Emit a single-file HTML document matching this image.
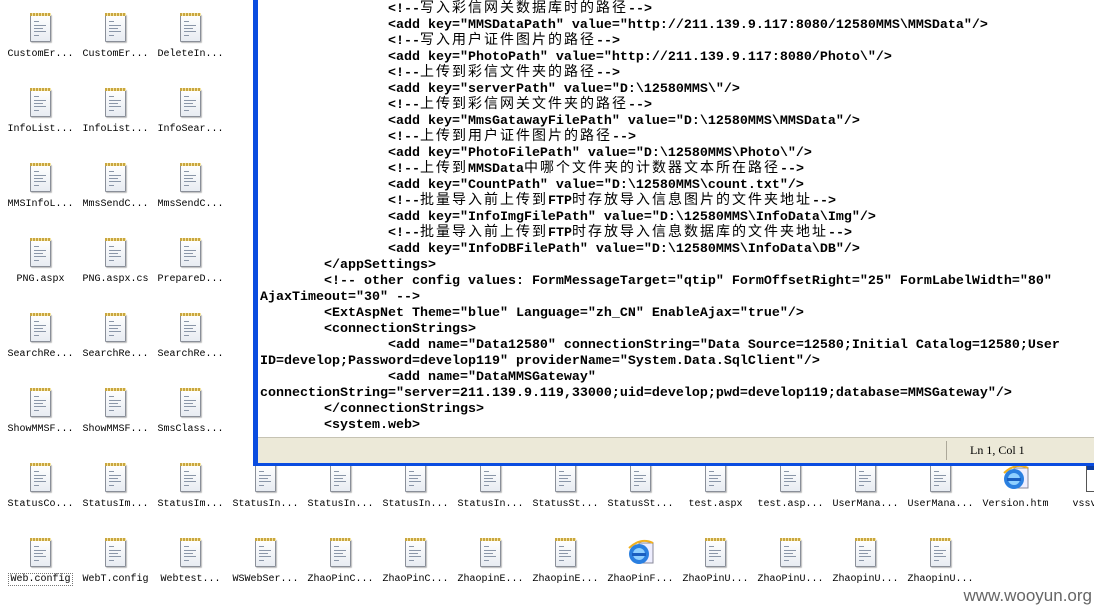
<!DOCTYPE html>
<html><head><meta charset="utf-8"><style>
body{margin:0;width:1094px;height:607px;overflow:hidden;background:#fff;position:relative;font-family:"Liberation Mono","Noto Sans CJK SC",monospace}
.ic{position:absolute;width:75px;height:70px}
.pg{position:absolute;left:27px;width:19px;height:26px;background:linear-gradient(#fff,#e8ecf2);border:1px solid #8a8f99;border-radius:1px;box-shadow:1px 1px 1px #bbb}
.pg:before{content:"";position:absolute;left:-1px;top:-2px;width:21px;height:3px;background:repeating-linear-gradient(90deg,#c9a640 0 2px,#f3e3a0 2px 3px)}
.pg i{position:absolute;left:3px;height:1px;background:#8a96a8}
.ie{position:absolute;left:24px;top:0;width:28px;height:28px}
.lb{position:absolute;top:35px;left:0;width:75px;text-align:center;font-size:10px;color:#000;white-space:nowrap;font-family:"Liberation Mono","Noto Sans CJK SC",monospace}
.sel{background:#fff;outline:1px dotted #777;padding:0 1px}
#win{position:absolute;left:253px;top:0;width:841px;height:466px;background:#0a4ce0}
#ed{position:absolute;left:5px;top:0;right:0;height:437px;background:#fff;overflow:hidden}
pre{margin:0;position:absolute;left:2px;top:2px;font-family:"Liberation Mono",monospace;font-weight:bold;font-size:13.33px;line-height:16px;color:#000}
pre .ln{height:16px;line-height:16px;white-space:pre;overflow:visible}
pre b{font-family:"Noto Sans CJK SC",sans-serif;font-weight:normal;font-size:14px;line-height:0;letter-spacing:2px}
#st{position:absolute;left:5px;top:437px;right:0;height:25px;background:#ece9d8;border-top:1px solid #c6c3b3}
#st span{position:absolute;left:688px;top:3px;width:1px;height:19px;background:#aca899}
#st div{position:absolute;left:712px;top:5px;font-family:"Liberation Serif","Noto Serif CJK SC",serif;font-size:12px}
#wm{position:absolute;right:2px;top:586px;font-family:"Liberation Sans",sans-serif;font-size:17px;color:#666}
</style></head><body>
<div id="icons"></div>
<div id="win"><div id="ed"><pre id="tx">                &lt;!--<b>写入彩信网关数据库时的路径</b>--&gt;
                &lt;add key="MMSDataPath" value="http://211.139.9.117:8080/12580MMS\MMSData"/&gt;
                &lt;!--<b>写入用户证件图片的路径</b>--&gt;
                &lt;add key="PhotoPath" value="http://211.139.9.117:8080/Photo\"/&gt;
                &lt;!--<b>上传到彩信文件夹的路径</b>--&gt;
                &lt;add key="serverPath" value="D:\12580MMS\"/&gt;
                &lt;!--<b>上传到彩信网关文件夹的路径</b>--&gt;
                &lt;add key="MmsGatawayFilePath" value="D:\12580MMS\MMSData"/&gt;
                &lt;!--<b>上传到用户证件图片的路径</b>--&gt;
                &lt;add key="PhotoFilePath" value="D:\12580MMS\Photo\"/&gt;
                &lt;!--<b>上传到</b>MMSData<b>中哪个文件夹的计数器文本所在路径</b>--&gt;
                &lt;add key="CountPath" value="D:\12580MMS\count.txt"/&gt;
                &lt;!--<b>批量导入前上传到</b>FTP<b>时存放导入信息图片的文件夹地址</b>--&gt;
                &lt;add key="InfoImgFilePath" value="D:\12580MMS\InfoData\Img"/&gt;
                &lt;!--<b>批量导入前上传到</b>FTP<b>时存放导入信息数据库的文件夹地址</b>--&gt;
                &lt;add key="InfoDBFilePath" value="D:\12580MMS\InfoData\DB"/&gt;
        &lt;/appSettings&gt;
        &lt;!-- other config values: FormMessageTarget="qtip" FormOffsetRight="25" FormLabelWidth="80"
AjaxTimeout="30" --&gt;
        &lt;ExtAspNet Theme="blue" Language="zh_CN" EnableAjax="true"/&gt;
        &lt;connectionStrings&gt;
                &lt;add name="Data12580" connectionString="Data Source=12580;Initial Catalog=12580;User
ID=develop;Password=develop119" providerName="System.Data.SqlClient"/&gt;
                &lt;add name="DataMMSGateway"
connectionString="server=211.139.9.119,33000;uid=develop;pwd=develop119;database=MMSGateway"/&gt;
        &lt;/connectionStrings&gt;
        &lt;system.web&gt;</pre></div>
<div id="st"><span></span><div>Ln 1, Col 1</div></div></div>
<div id="wm">www.wooyun.org</div>
<script>
var tx=document.getElementById("tx");
tx.innerHTML=tx.innerHTML.split("\n").map(function(l){return '<div class="ln">'+l+'</div>';}).join("");
var rows=[
["CustomEr...","CustomEr...","DeleteIn...","Dele"],
["InfoList...","InfoList...","InfoSear...","Info"],
["MMSInfoL...","MmsSendC...","MmsSendC...","Modi"],
["PNG.aspx","PNG.aspx.cs","PrepareD...","Prep"],
["SearchRe...","SearchRe...","SearchRe...","Sear"],
["ShowMMSF...","ShowMMSF...","SmsClass...","SmsC"],
["StatusCo...","StatusIm...","StatusIm...","StatusIn...","StatusIn...","StatusIn...","StatusIn...","StatusSt...","StatusSt...","test.aspx","test.asp...","UserMana...","UserMana...","*Version.htm","vssver"],
["Web.config","WebT.config","Webtest...","WSWebSer...","ZhaoPinC...","ZhaoPinC...","ZhaopinE...","ZhaopinE...","*ZhaoPinF...","ZhaoPinU...","ZhaoPinU...","ZhaopinU...","ZhaopinU..."]];
var h="";
rows.forEach(function(r,ri){r.forEach(function(n,ci){
 var x=3+75*ci,y=14+75*ri,ie=n[0]=="*";if(ie)n=n.slice(1);
 var icon=ie?'<svg class="ie" viewBox="0 0 28 28"><rect x="12" y="4" width="14" height="20" fill="#eef" stroke="#889"/><circle cx="12" cy="15" r="10" fill="#2a7fe0"/><circle cx="12" cy="15" r="6" fill="#8fd0ff"/><rect x="5" y="14" width="14" height="3" fill="#1a5fc0"/><path d="M2 9 Q14 -2 26 4" stroke="#f0b020" stroke-width="2" fill="none"/></svg>'
 :'<div class="pg"><i style="top:6px;width:5px"></i><i style="top:10px;width:12px"></i><i style="top:13px;width:9px"></i><i style="top:16px;width:12px"></i><i style="top:20px;width:5px"></i></div>';
 if(n=="vssver")icon='<div style="position:absolute;left:33px;top:0;width:26px;height:26px;border:1px solid #555;background:#fff"><div style="height:5px;background:#0a3ca0"></div></div>';
 var l=n=="Web.config"?'<span class="sel">'+n+'</span>':n;
 h+='<div class="ic" style="left:'+x+'px;top:'+y+'px">'+icon+'<div class="lb">'+l+'</div></div>';
});});
document.getElementById("icons").innerHTML=h;
</script>
</body></html>
